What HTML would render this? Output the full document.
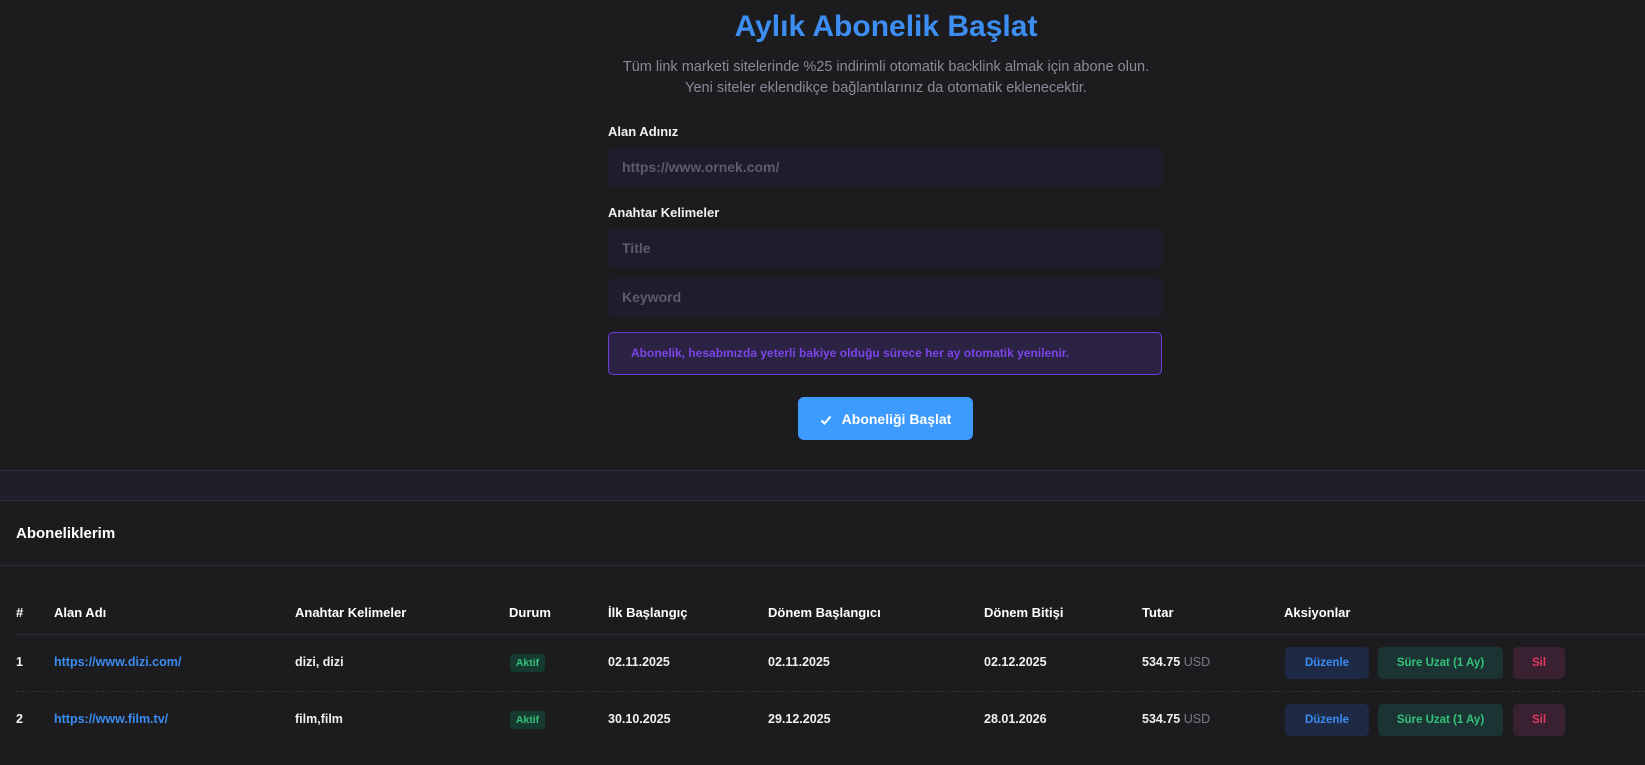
<!DOCTYPE html>
<html><head><meta charset="utf-8"><style>
*{box-sizing:border-box;margin:0;padding:0}
body{width:1645px;height:765px;background:#1c1c1e;font-family:"Liberation Sans",sans-serif;color:#fff;position:relative;overflow:hidden}
.a{position:absolute;white-space:nowrap}
.inp{position:absolute;left:608px;width:554px;height:39px;background:#1e1d2c;border-radius:6px;color:#5c5b70;font-size:14px;font-weight:bold;padding-left:14px;line-height:39px}
.lbl{font-size:13px;font-weight:bold;color:#f2f2f2}
.th{font-size:13px;font-weight:bold;top:605px}
.td{font-size:12.5px;font-weight:bold;color:#f0f0f0}
.lnk{color:#3b8cf0}
.badge{position:absolute;left:510px;width:35px;height:18px;background:#173a30;color:#34c17a;font-size:10.5px;font-weight:bold;text-align:center;line-height:18px;border-radius:4px}
.b{position:absolute;height:32px;border-radius:5px;font-size:11.5px;font-weight:bold;text-align:center;line-height:32px}
.b1{left:1285px;width:84px;background:#1e2a45;color:#3b8cf0}
.b2{left:1378px;width:125px;background:#1b3433;color:#34c17a}
.b3{left:1513px;width:52px;background:#3a2131;color:#e0385f}
.usd{color:#7a7a85;font-weight:normal}
</style></head><body>
<div class="a" style="left:0;width:1772px;top:10px;text-align:center;font-size:30px;font-weight:bold;color:#3d8ef2">Aylık Abonelik Başlat</div>
<div class="a" style="left:0;width:1772px;top:57px;text-align:center;font-size:14.5px;color:#8a8a98;line-height:21px">Tüm link marketi sitelerinde %25 indirimli otomatik backlink almak için abone olun.<br>Yeni siteler eklendikçe bağlantılarınız da otomatik eklenecektir.</div>
<div class="a lbl" style="left:608px;top:124px">Alan Adınız</div>
<div class="inp" style="top:148px">https://www.ornek.com/</div>
<div class="a lbl" style="left:608px;top:205px">Anahtar Kelimeler</div>
<div class="inp" style="top:229px">Title</div>
<div class="inp" style="top:278px">Keyword</div>
<div class="a" style="left:608px;top:332px;width:554px;height:43px;background:#2b2244;border:1px solid #6b3fd6;border-radius:5px;color:#7b45e8;font-size:12px;font-weight:bold;line-height:41px;padding-left:22px">Abonelik, hesabınızda yeterli bakiye olduğu sürece her ay otomatik yenilenir.</div>
<div class="a" style="left:798px;top:397px;width:175px;height:43px;background:#3d9bff;border-radius:6px;font-size:14px;font-weight:bold;line-height:44px;text-align:center;color:#fff"><svg width="12" height="10" viewBox="0 0 12 10" style="margin-right:10px;vertical-align:-1px"><path d="M1.5 5.5L4.5 8.5L10.5 1.5" stroke="#fff" stroke-width="2" fill="none"/></svg>Aboneliği Başlat</div>
<div class="a" style="left:0;top:470px;width:1645px;height:31px;background:#1f1e29;border-top:1px solid #2e2c42;border-bottom:1px solid #2e2c42"></div>
<div class="a" style="left:16px;top:525px;font-size:15px;font-weight:bold">Aboneliklerim</div>
<div class="a" style="left:0;top:565px;width:1645px;height:1px;background:#2d2d35"></div>
<div class="a th" style="left:16px">#</div>
<div class="a th" style="left:54px">Alan Adı</div>
<div class="a th" style="left:295px">Anahtar Kelimeler</div>
<div class="a th" style="left:509px">Durum</div>
<div class="a th" style="left:608px">İlk Başlangıç</div>
<div class="a th" style="left:768px">Dönem Başlangıcı</div>
<div class="a th" style="left:984px">Dönem Bitişi</div>
<div class="a th" style="left:1142px">Tutar</div>
<div class="a th" style="left:1284px">Aksiyonlar</div>
<div class="a" style="left:16px;top:634px;width:1629px;height:1px;background:#2d2d35"></div>
<div class="a" style="left:16px;top:691px;width:1629px;border-top:1px dashed #2f2f36"></div>

<div class="a td" style="left:16px;top:655px">1</div>
<div class="a td lnk" style="left:54px;top:655px">https://www.dizi.com/</div>
<div class="a td" style="left:295px;top:655px">dizi, dizi</div>
<div class="badge" style="top:654px">Aktif</div>
<div class="a td" style="left:608px;top:655px">02.11.2025</div>
<div class="a td" style="left:768px;top:655px">02.11.2025</div>
<div class="a td" style="left:984px;top:655px">02.12.2025</div>
<div class="a td" style="left:1142px;top:655px">534.75 <span class="usd">USD</span></div>
<div class="b b1" style="top:647px">Düzenle</div>
<div class="b b2" style="top:647px">Süre Uzat (1 Ay)</div>
<div class="b b3" style="top:647px">Sil</div>

<div class="a td" style="left:16px;top:712px">2</div>
<div class="a td lnk" style="left:54px;top:712px">https://www.film.tv/</div>
<div class="a td" style="left:295px;top:712px">film,film</div>
<div class="badge" style="top:711px">Aktif</div>
<div class="a td" style="left:608px;top:712px">30.10.2025</div>
<div class="a td" style="left:768px;top:712px">29.12.2025</div>
<div class="a td" style="left:984px;top:712px">28.01.2026</div>
<div class="a td" style="left:1142px;top:712px">534.75 <span class="usd">USD</span></div>
<div class="b b1" style="top:704px">Düzenle</div>
<div class="b b2" style="top:704px">Süre Uzat (1 Ay)</div>
<div class="b b3" style="top:704px">Sil</div>
</body></html>
